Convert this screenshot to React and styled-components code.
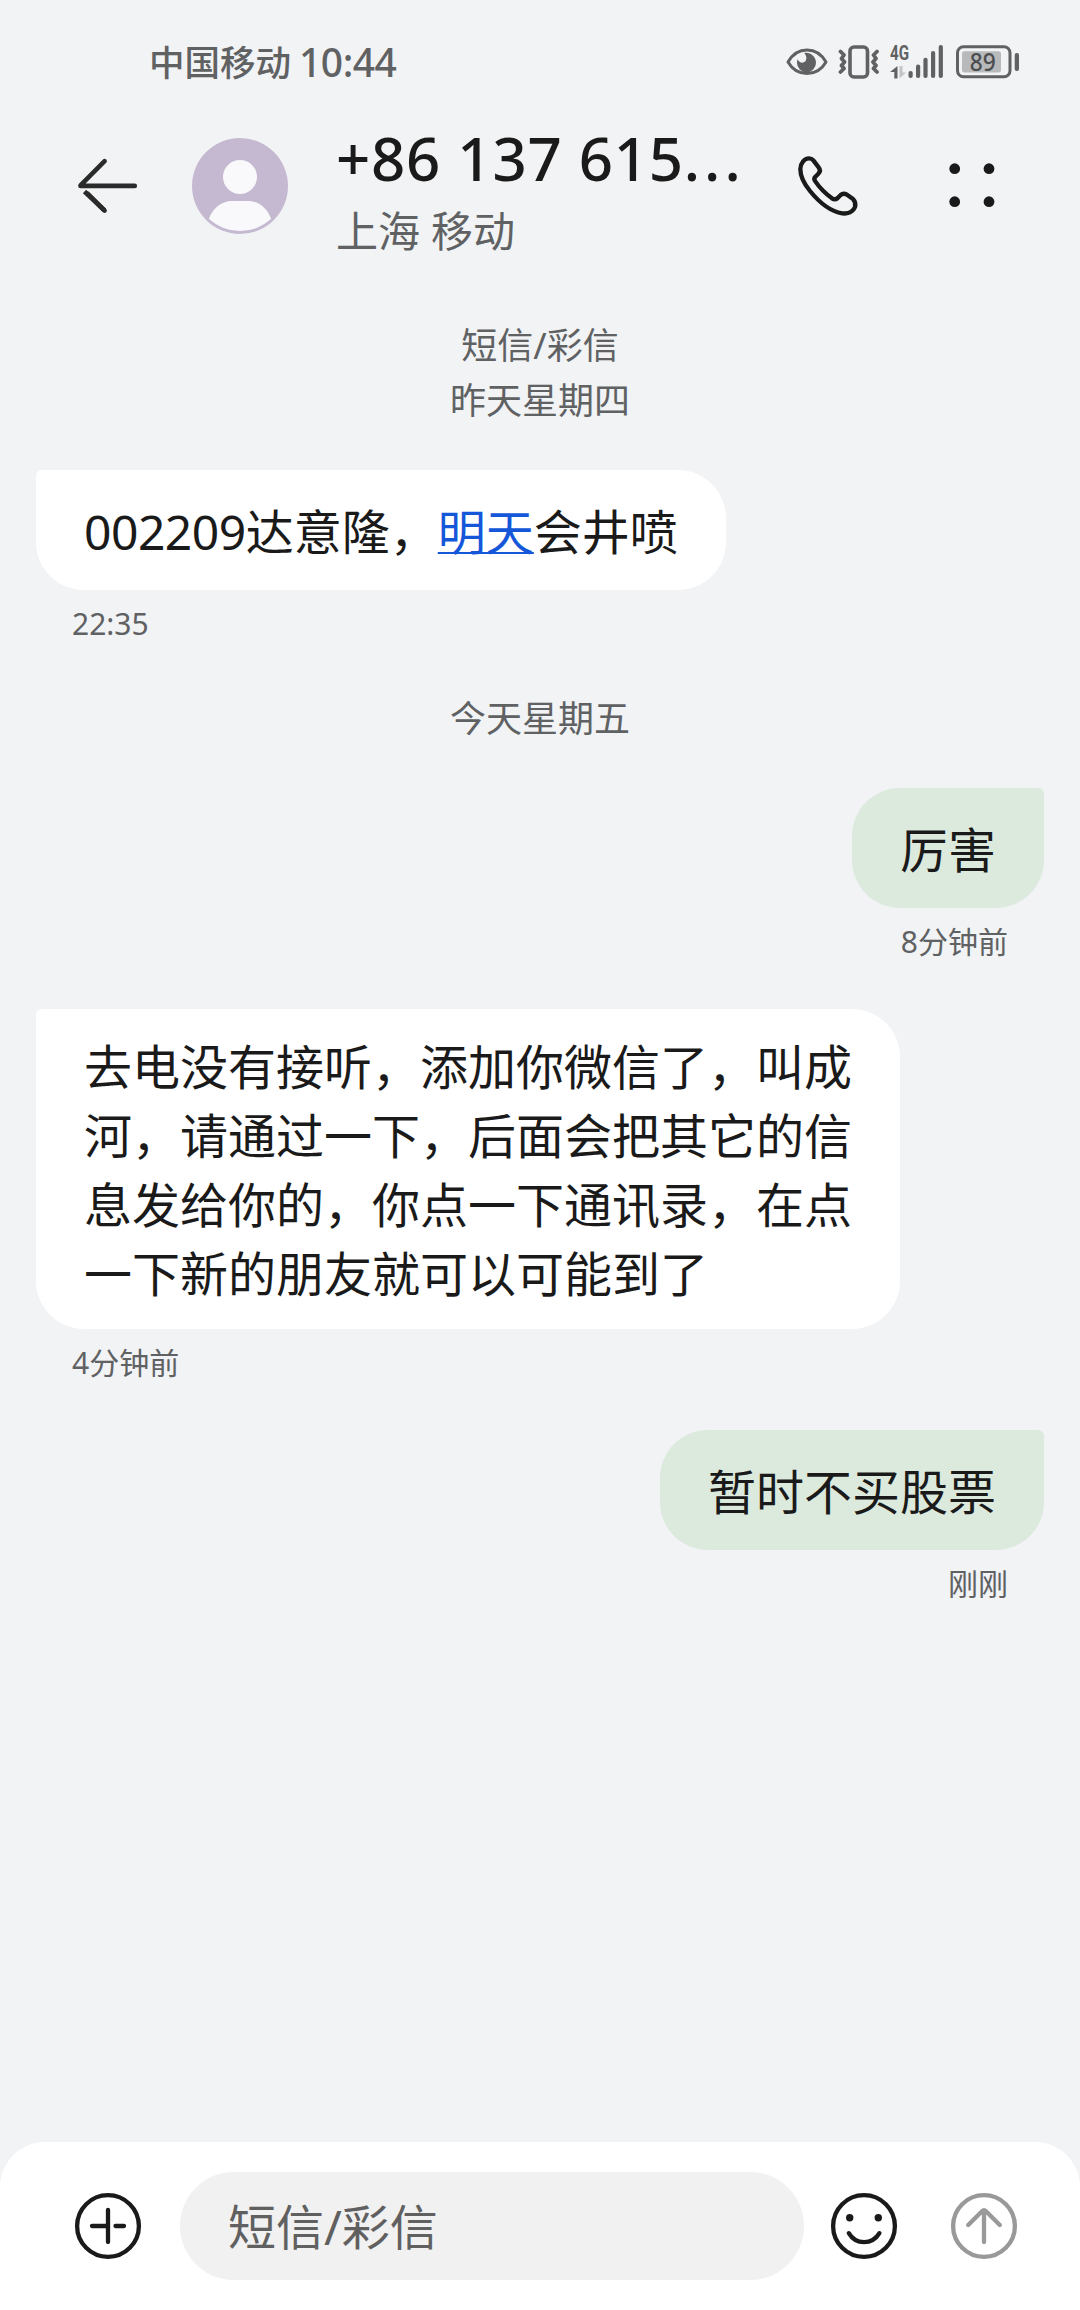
import React from 'react';
import styled, { createGlobalStyle } from 'styled-components';

const messages = [
  { type: 'label', lines: ['短信/彩信', '昨天星期四'] },
  {
    type: 'in',
    text: (
      <>
        <span>002209</span>达意隆，<a href="#tomorrow">明天</a>会井喷
      </>
    ),
    time: '22:35',
  },
  { type: 'label', lines: ['今天星期五'] },
  { type: 'out', text: '厉害', time: '8分钟前' },
  {
    type: 'in',
    text:
      '去电没有接听，添加你微信了，叫成河，请通过一下，后面会把其它的信息发给你的，你点一下通讯录，在点一下新的朋友就可以可能到了',
    time: '4分钟前',
  },
  { type: 'out', text: '暂时不买股票', time: '刚刚' },
];

const EyeIcon = () => (
  <svg width="42" height="28" viewBox="0 0 42 28">
    <path
      d="M2 14C6 7 13 2 21 2s15 5 19 12c-4 7-11 11.500-19 11.500S6 21 2 14z"
      fill="none"
      stroke="#606163"
      strokeWidth="3"
      strokeLinejoin="round"
    />
    <path
      d="M18.300 4.900C24.500 3.800 30 8.500 30 14.800a9.500 9.500 0 0 1-19 0c0-1.300.2-2.500.6-3.600 1.200 2.600 3.400 3.900 5.600 3.300 3.700-1 4.300-6 1.100-9.600z"
      fill="#606163"
    />
  </svg>
);

const VibrateIcon = () => (
  <svg width="42" height="34" viewBox="0 0 42 34" fill="none" stroke="#606163">
    <rect x="12" y="2" width="17.500" height="30" rx="4" strokeWidth="3.600" />
    <path
      d="M2.500 6.500l3.500 3.500-2.500 3.500 3 3.500-3 3.500 2.500 3-3.500 3.500M39 6.500l-3.500 3.500 2.500 3.500-3 3.500 3 3.500-2.500 3 3.500 3.500"
      strokeWidth="3.800"
      strokeLinecap="round"
      strokeLinejoin="round"
    />
  </svg>
);

const SignalIcon = () => (
  <svg width="56" height="50" viewBox="0 -8 56 50" fill="#606163">
    <text
      x="0"
      y="14.500"
      fontFamily="Roboto, sans-serif"
      fontSize="20"
      fontWeight="700"
      textLength="19"
      lengthAdjust="spacingAndGlyphs"
    >
      4G
    </text>
    <path d="M7.500 21v12.500H4.300V27H0z" />
    <path d="M9.500 21v12.500l6.500-6h-3.500V21z" fill="#c3c4c6" />
    <rect x="18.500" y="26" width="4.200" height="7" rx="2" />
    <rect x="26" y="19.500" width="4.200" height="13.500" rx="2" />
    <rect x="33.400" y="12.700" width="4.200" height="20.300" rx="2" />
    <rect x="41" y="6" width="4.200" height="27" rx="2" />
    <rect x="48.700" y="0" width="4.200" height="33" rx="2" />
  </svg>
);

const BatteryIcon = () => (
  <svg width="64" height="34" viewBox="0 0 64 34" fill="#606163">
    <rect
      x="1.500"
      y="1.800"
      width="52.500"
      height="30"
      rx="6"
      fill="none"
      stroke="#606163"
      strokeWidth="3"
    />
    <rect x="6" y="6.300" width="39" height="21.200" rx="2.500" fill="#b8b9bb" />
    <rect x="58.700" y="8" width="4.300" height="18" rx="2" />
    <text
      x="26.700"
      y="25.800"
      fontFamily="'Noto Sans', sans-serif"
      fontSize="25"
      fontWeight="500"
      fill="#4c4d4f"
      textAnchor="middle"
      textLength="26"
      lengthAdjust="spacingAndGlyphs"
    >
      89
    </text>
  </svg>
);

const BackIcon = () => (
  <svg
    width="72"
    height="72"
    viewBox="0 0 72 72"
    fill="none"
    stroke="#2b2b2b"
    strokeWidth="4.600"
    strokeLinecap="round"
  >
    <path d="M8.500 35.900H62.800M8.500 35.300L32.600 11.200" />
    <path d="M12.500 41.500l20.100 19" strokeLinecap="butt" />
    <path d="M32.600 60.600l-17-17" />
  </svg>
);

const Avatar = () => (
  <svg width="96" height="96" viewBox="0 0 96 96">
    <circle cx="48" cy="48" r="48" fill="#c5b8d1" />
    <circle cx="48" cy="39" r="17" fill="#f9f9fc" />
    <path
      d="M17 81C20 71 29 63 40 63h16c11 0 20 8 23 18a46 46 0 0 1-62 0z"
      fill="#f9f9fc"
    />
  </svg>
);

const PhoneIcon = () => (
  <svg width="72" height="72" viewBox="96 120 216 216">
    <path
      d="M147 145q8 0 13 6l16 21q8 10-1 19l-9 9q-6 7 0 14c14 21 30 36 50 51q9 6 17-1l9-9q8-7 19-1l18 13q10 11 6 24c-6 15-22 21-38 19-32-5-67-30-97-67-18-22-29-45-29-66 0-17 12-32 26-32z"
      fill="none"
      stroke="#1a1a1a"
      strokeWidth="13"
      strokeLinejoin="round"
    />
  </svg>
);

const MoreIcon = () => (
  <svg width="72" height="72" viewBox="0 0 72 72" fill="#1a1a1a">
    <circle cx="18.700" cy="18.700" r="5.400" />
    <circle cx="53" cy="18.700" r="5.400" />
    <circle cx="18.700" cy="51.700" r="5.400" />
    <circle cx="53" cy="51.700" r="5.400" />
  </svg>
);

const RoundIcon = ({ color = '#1a1a1a', children }) => (
  <svg
    width="72"
    height="72"
    viewBox="0 0 72 72"
    fill="none"
    stroke={color}
    strokeWidth="4.300"
    strokeLinecap="round"
    strokeLinejoin="round"
  >
    <circle cx="36" cy="36" r="30.900" />
    {children}
  </svg>
);

const App = () => {
  return (
    <Screen>
      <GlobalStyle />
      <StatusBar>
        <Carrier>中国移动</Carrier>
        <Clock>10:44</Clock>
        <StatusIcons>
          <EyeIcon />
          <VibrateIcon />
          <SignalIcon />
          <BatteryIcon />
        </StatusIcons>
      </StatusBar>
      <Header>
        <IconButton aria-label="返回">
          <BackIcon />
        </IconButton>
        <AvatarBox>
          <Avatar />
        </AvatarBox>
        <Contact>
          <Number>
            +86 137 615<Dots>...</Dots>
          </Number>
          <Region>上海 移动</Region>
        </Contact>
        <HeaderActions>
          <IconButton aria-label="拨打">
            <PhoneIcon />
          </IconButton>
          <IconButton aria-label="更多">
            <MoreIcon />
          </IconButton>
        </HeaderActions>
      </Header>
      <Thread>
        {messages.map((message, index) =>
          message.type === 'label' ? (
            <DateLabel key={index}>
              {message.lines.map(line => (
                <div key={line}>{line}</div>
              ))}
            </DateLabel>
          ) : (
            <Message key={index} $mine={message.type === 'out'}>
              <Bubble $mine={message.type === 'out'}>
                <div>{message.text}</div>
              </Bubble>
              <Time>{message.time}</Time>
            </Message>
          )
        )}
      </Thread>
      <Composer>
        <IconButton aria-label="添加">
          <RoundIcon>
            <path d="M36 20v32M20 36h16M43.500 36h8.500" />
          </RoundIcon>
        </IconButton>
        <Field>短信/彩信</Field>
        <ComposerActions>
          <IconButton aria-label="表情">
            <RoundIcon>
              <circle cx="21.700" cy="27.700" r="3.700" fill="#1a1a1a" stroke="none" />
              <circle cx="50.300" cy="27.700" r="3.700" fill="#1a1a1a" stroke="none" />
              <path d="M20.800 43.200c7 12 23.400 12 30.600 0" />
            </RoundIcon>
          </IconButton>
          <IconButton aria-label="发送">
            <RoundIcon color="#999">
              <path d="M36 52V20.500M20.200 35L34 21.200q2-2 4 0L51.800 35" />
            </RoundIcon>
          </IconButton>
        </ComposerActions>
      </Composer>
    </Screen>
  );
};

export default App;

const GlobalStyle = createGlobalStyle`
  * {
    box-sizing: border-box;
  }
  body {
    margin: 0;
    background: #f1f3f5;
  }
  svg {
    display: block;
    flex-shrink: 0;
  }
`;

const Screen = styled.div`
  display: flex;
  flex-direction: column;
  width: 1080px;
  height: 2310px;
  overflow: hidden;
  background: #f1f3f5;
  color: #1a1a1a;
  font-family: 'Noto Sans', 'Noto Sans CJK SC', sans-serif;
`;

const StatusBar = styled.div`
  display: flex;
  align-items: center;
  height: 124px;
  padding: 0 60px 0 149px;
  color: #606163;
`;

const Carrier = styled.div`
  font-size: 35.5px;
  line-height: 40px;
  font-weight: 500;
`;

const Clock = styled.div`
  margin-left: 8px;
  font-size: 39px;
  line-height: 40px;
  font-weight: 500;
  letter-spacing: -0.5px;
`;

const StatusIcons = styled.div`
  display: flex;
  align-items: center;
  gap: 10px;
  margin-left: auto;
`;

const Header = styled.header`
  display: flex;
  align-items: center;
  height: 124px;
  padding: 0 72px;
`;

const IconButton = styled.button`
  flex-shrink: 0;
  padding: 0;
  border: 0;
  background: none;
  cursor: pointer;
`;

const AvatarBox = styled.div`
  margin: 0 48px;
`;

const Contact = styled.div`
  width: 420px;
`;

const Number = styled.div`
  font-size: 60px;
  line-height: 88px;
  font-weight: 500;
  letter-spacing: 0.7px;
  white-space: nowrap;
`;

const Dots = styled.span`
  letter-spacing: 4px;
`;

const Region = styled.div`
  color: #606163;
  font-size: 42px;
  line-height: 57px;
`;

const HeaderActions = styled.div`
  display: flex;
  gap: 72px;
  margin-left: auto;
`;

const Thread = styled.main`
  display: flex;
  flex: 1;
  flex-direction: column;
  padding: 70px 36px 0;
`;

const DateLabel = styled.div`
  margin-bottom: 42px;
  color: #606163;
  font-size: 36px;
  line-height: 55px;
  text-align: center;
`;

const Message = styled.div`
  display: flex;
  flex-direction: column;
  align-items: ${({ $mine }) => ($mine ? 'flex-end' : 'flex-start')};
  margin-bottom: 47px;
`;

const Bubble = styled.div`
  display: flex;
  align-items: center;
  max-width: 864px;
  min-height: 120px;
  padding: 23px 48px 21px;
  border-radius: ${({ $mine }) =>
    $mine ? '48px 6px 48px 48px' : '6px 48px 48px 48px'};
  background: ${({ $mine }) => ($mine ? '#dce9dd' : '#fff')};
  font-size: 48px;
  line-height: 69px;
  span {
    letter-spacing: -0.5px;
  }
  a {
    color: #1457d9;
    text-decoration-thickness: 2px;
    text-underline-offset: 2px;
    text-decoration-skip-ink: none;
  }
`;

const Time = styled.div`
  margin-top: 13px;
  padding: 0 36px;
  color: #606163;
  font-size: 30px;
  line-height: 41px;
`;

const Composer = styled.footer`
  display: flex;
  align-items: center;
  height: 168px;
  padding: 0 60px 0 72px;
  border-radius: 45px 45px 0 0;
  background: #fff;
`;

const ComposerActions = styled.div`
  display: flex;
  gap: 48px;
`;

const Field = styled.div`
  flex: 1;
  height: 108px;
  margin: 0 24px 0 36px;
  padding: 1px 0 0 48px;
  border-radius: 54px;
  background: #f1f1f1;
  color: #606060;
  font-size: 48px;
  line-height: 108px;
`;
